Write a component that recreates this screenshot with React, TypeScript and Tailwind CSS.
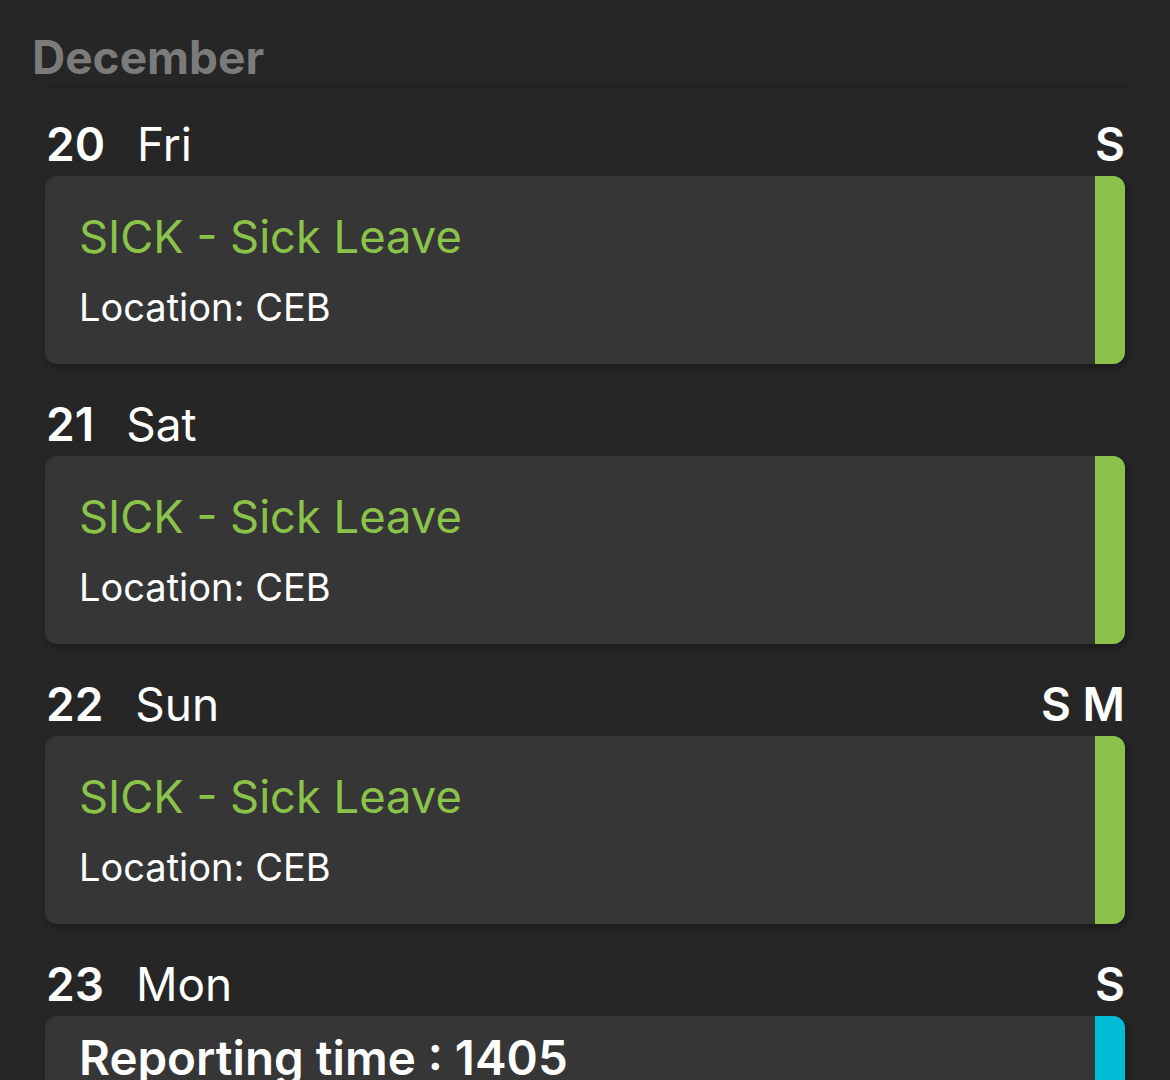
const days = [
  { num: "20", name: "Fri", tags: "S", kind: "sick" },
  { num: "21", name: "Sat", tags: "", kind: "sick" },
  { num: "22", name: "Sun", tags: "S M", kind: "sick" },
  { num: "23", name: "Mon", tags: "S", kind: "report" },
];

function DayCard({ kind }: { kind: string }) {
  if (kind === "report") {
    return (
      <div className="flex h-[188px] overflow-hidden rounded-[12px] bg-[#363636] shadow-[2px_3px_6px_rgba(0,0,0,0.35)]">
        <div className="flex-1 px-[34px] pt-[14px]">
          <div className="text-[47.5px] font-semibold leading-[56px] text-white">
            Reporting time : 1405
          </div>
        </div>
        <div className="w-[30px] bg-[#00bcd4]" />
      </div>
    );
  }
  return (
    <div className="flex h-[188px] overflow-hidden rounded-[12px] bg-[#363636] shadow-[2px_3px_6px_rgba(0,0,0,0.35)]">
      <div className="flex flex-1 flex-col px-[34px] pt-[33px]">
        <div className="text-[45.3px] leading-[56px] text-[#8bc34a]">
          SICK - Sick Leave
        </div>
        <div className="mt-[20px] text-[38px] leading-[44px] text-white">
          Location: CEB
        </div>
      </div>
      <div className="w-[30px] bg-[#8bc34a]" />
    </div>
  );
}

export default function App() {
  return (
    <div className="h-[1080px] w-[1170px] overflow-hidden bg-[#262626] font-['Inter',sans-serif]">
      <div className="px-[32px] pt-[30px] text-[46px] font-bold leading-[54px] text-[#7b7b7b]">
        December
      </div>
      <div className="mx-[45px] mt-[2px] h-[2px] bg-[#1f1f1f] blur-[1px]" />
      <div className="flex flex-col px-[45px] pt-[28px]">
        {days.map((d) => (
          <div key={d.num} className="mb-[32px] flex flex-col">
            <div className="flex h-[60px] items-center pb-[4px] text-white">
              <span className="ml-[1px] mr-[32px] text-[46px] font-semibold leading-[56px]">
                {d.num}
              </span>
              <span className="text-[46px] leading-[56px]">{d.name}</span>
              <span className="ml-auto text-[46px] font-semibold leading-[56px]">
                {d.tags}
              </span>
            </div>
            <DayCard kind={d.kind} />
          </div>
        ))}
      </div>
    </div>
  );
}
